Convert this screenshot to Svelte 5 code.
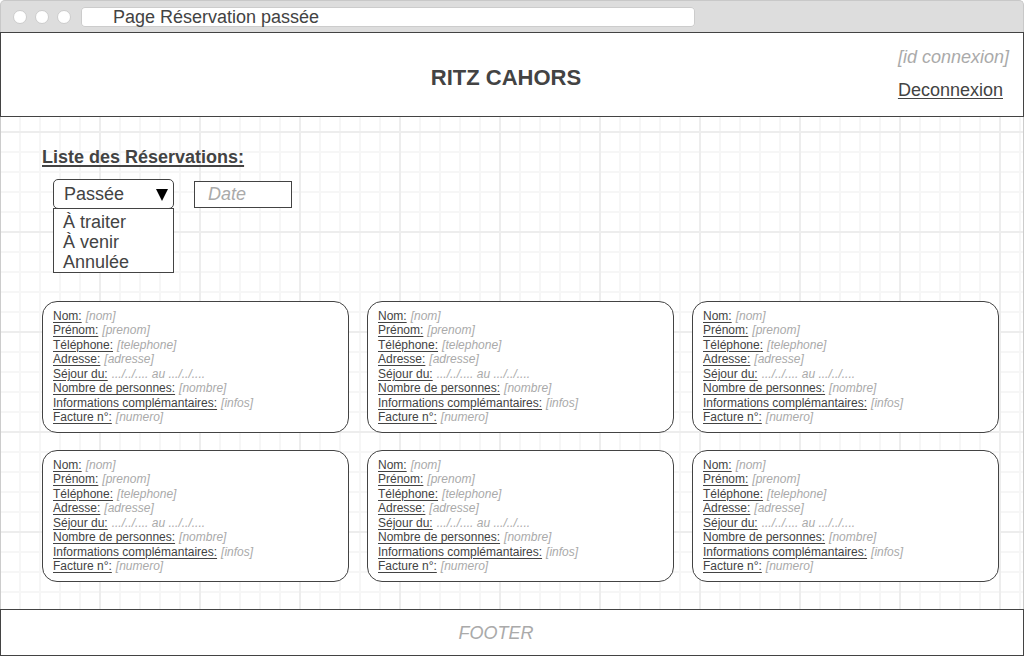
<script>
  const statuses = ['À traiter', 'À venir', 'Annulée'];
  const fields = [
    ['Nom:', '[nom]'],
    ['Prénom:', '[prenom]'],
    ['Téléphone:', '[telephone]'],
    ['Adresse:', '[adresse]'],
    ['Séjour du:', '.../../.... au .../../....'],
    ['Nombre de personnes:', '[nombre]'],
    ['Informations complémantaires:', '[infos]'],
    ['Facture n°:', '[numero]']
  ];
  const reservations = Array.from({ length: 6 }, () => fields);

  let status = $state('Passée');
  let address = $state('Page Réservation passée');
</script>

<div class="window">
  <div class="chrome">
    <span class="dot"></span>
    <span class="dot"></span>
    <span class="dot"></span>
    <input class="address" type="text" aria-label="Adresse de la page" bind:value={address} />
  </div>

  <header>
    <h1>RITZ CAHORS</h1>
    <div class="account">
      <span class="user">[id connexion]</span>
      <a href="#deconnexion">Deconnexion</a>
    </div>
  </header>

  <main>
    <h2>Liste des Réservations:</h2>

    <div class="filters">
      <div class="status">
        <select aria-label="Statut" bind:value={status}>
          <option>Passée</option>
          {#each statuses as name}
            <option>{name}</option>
          {/each}
        </select>
        <svg class="arrow" viewBox="0 0 12 12" aria-hidden="true"><path d="M0 0H12L6 12Z" /></svg>
        <div class="menu">
          {#each statuses as name}
            <button type="button" onclick={() => (status = name)}>{name}</button>
          {/each}
        </div>
      </div>
      <input class="date" type="text" placeholder="Date" aria-label="Date" />
    </div>

    <div class="cards">
      {#each reservations as reservation}
        <dl class="card">
          {#each reservation as [label, value]}
            <div class="field">
              <dt>{label}</dt>
              <dd>{value}</dd>
            </div>
          {/each}
        </dl>
      {/each}
    </div>
  </main>

  <footer>FOOTER</footer>
</div>

<style>
  :global(body) {
    margin: 0;
    background: #fff;
  }

  .window,
  .window * {
    box-sizing: border-box;
  }

  .window {
    display: flex;
    flex-direction: column;
    min-height: 100vh;
    font-family: "Liberation Sans", Arial, sans-serif;
    font-size: 18px;
    line-height: 20px;
    color: #434343;
  }

  input,
  select,
  button {
    font: inherit;
    color: inherit;
    margin: 0;
  }

  .chrome {
    display: flex;
    align-items: center;
    gap: 8px;
    height: 32px;
    padding: 1px 12px 0;
    background: #ddd;
    border: 1px solid #c8c8c8;
    border-bottom: 0;
    border-radius: 5px 5px 0 0;
  }

  .dot {
    flex: none;
    width: 14px;
    height: 14px;
    border: 1px solid #ccc;
    border-radius: 50%;
    background: #fff;
  }

  .address {
    width: 60vw;
    height: 20px;
    margin-left: 2px;
    padding: 0 32px;
    border: 0;
    border-radius: 4px;
    background: #fff;
    box-shadow: inset 0 0 0 1px #ccc;
  }

  header {
    display: grid;
    grid-template-columns: 1fr auto 1fr;
    align-items: center;
    min-height: 85px;
    padding: 6px 12px 0 0;
    border: 1px solid #434343;
    background: #fff;
  }

  h1 {
    grid-column: 2;
    margin: 0;
    font-size: 22px;
    line-height: 26px;
  }

  .account {
    display: flex;
    flex-direction: column;
    justify-self: end;
    align-items: flex-start;
    gap: 13px;
    padding: 0 2px 8px 0;
  }

  .user,
  .date::placeholder,
  dd,
  footer {
    color: #aaa;
    font-style: italic;
    opacity: 1;
  }

  a {
    color: inherit;
    text-underline-offset: 2px;
    text-decoration-thickness: 1px;
  }

  main {
    flex: 1;
    padding: 30px 24px 27px 41px;
    border: solid #ccc;
    border-width: 0 1px;
    background-color: #fff;
    background-image:
      linear-gradient(90deg, #ededed 2px, transparent 2px),
      linear-gradient(#ededed 2px, transparent 2px),
      linear-gradient(90deg, #f6f6f6 2px, transparent 2px),
      linear-gradient(#f6f6f6 2px, transparent 2px);
    background-size: 100px 100px, 100px 100px, 20px 20px, 20px 20px;
    background-position: -2px 14px;
  }

  h2 {
    margin: 0;
    font-size: 18px;
    line-height: 20px;
    text-decoration: underline;
    text-decoration-thickness: 2px;
    text-underline-offset: 2px;
  }

  .filters {
    display: flex;
    align-items: center;
    gap: 20px;
    margin: 12px 0 92px 11px;
  }

  .status {
    position: relative;
    width: 121px;
  }

  select {
    display: block;
    appearance: none;
    width: 100%;
    height: 30px;
    padding: 0 10px;
    border: 1px solid #434343;
    border-radius: 5px;
    background: #fff;
  }

  .arrow {
    position: absolute;
    top: 10px;
    right: 6px;
    width: 12px;
    height: 12px;
    pointer-events: none;
  }

  .menu {
    position: absolute;
    top: 29px;
    left: 0;
    width: 100%;
    padding: 3px 0 0;
    border: 1px solid #434343;
    background: #fff;
  }

  .menu button {
    display: block;
    width: 100%;
    padding: 0 9px;
    border: 0;
    background: none;
    text-align: left;
  }

  .date {
    width: 98px;
    height: 27px;
    padding: 0 13px;
    border: 1px solid #434343;
    background: #fff;
  }

  .cards {
    display: grid;
    grid-template-columns: repeat(3, 1fr);
    grid-auto-rows: minmax(132px, auto);
    gap: 17px 18px;
  }

  .card {
    display: flex;
    flex-direction: column;
    justify-content: space-between;
    margin: 0;
    padding: 7px 10px 8px;
    border: 1px solid #434343;
    border-radius: 15px;
    background: #fff;
    font-size: 12px;
    line-height: 14px;
  }

  .field {
    display: flex;
    gap: 4px;
  }

  dt {
    text-decoration: underline;
    text-decoration-thickness: 1px;
    text-underline-offset: 2px;
  }

  dd {
    margin: 0;
  }

  footer {
    display: flex;
    align-items: center;
    justify-content: center;
    min-height: 47px;
    padding-right: 32px;
    border: 1px solid #434343;
    background: #fff;
  }
</style>
